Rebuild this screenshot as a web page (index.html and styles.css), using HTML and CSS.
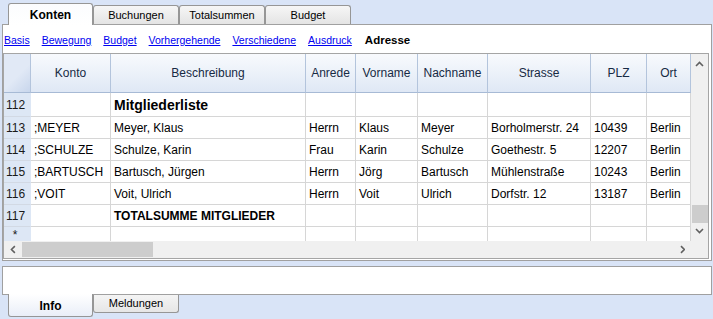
FILE: index.html
```html
<!DOCTYPE html>
<html lang="de">

<head>
  <meta charset="UTF-8">
  <title>Konten - Adresse</title>
  <link rel="stylesheet" href="styles.css">
</head>

<body>
  <div class="tabs tabs--top">
    <div class="tab tab--active">Konten</div>
    <div class="tab">Buchungen</div>
    <div class="tab">Totalsummen</div>
    <div class="tab">Budget</div>
  </div>

  <div class="panel">
    <nav class="views">
      <a href="#">Basis</a>
      <a href="#">Bewegung</a>
      <a href="#">Budget</a>
      <a href="#">Vorhergehende</a>
      <a href="#">Verschiedene</a>
      <a href="#">Ausdruck</a>
      <span class="views__current">Adresse</span>
    </nav>

    <div class="grid">
      <div class="grid__main">
        <div class="grid__view">
          <div class="cells">
            <div class="hd hd--corner"></div>
            <div class="hd">Konto</div>
            <div class="hd">Beschreibung</div>
            <div class="hd">Anrede</div>
            <div class="hd">Vorname</div>
            <div class="hd">Nachname</div>
            <div class="hd">Strasse</div>
            <div class="hd">PLZ</div>
            <div class="hd">Ort</div>

            <div class="rn rn--tall">112</div>
            <div class="c"></div>
            <div class="c c--title">Mitgliederliste</div>
            <div class="c"></div><div class="c"></div><div class="c"></div><div class="c"></div><div class="c"></div><div class="c"></div>

            <div class="rn">113</div>
            <div class="c">;MEYER</div>
            <div class="c">Meyer, Klaus</div>
            <div class="c">Herrn</div>
            <div class="c">Klaus</div>
            <div class="c">Meyer</div>
            <div class="c">Borholmerstr. 24</div>
            <div class="c">10439</div>
            <div class="c">Berlin</div>

            <div class="rn">114</div>
            <div class="c">;SCHULZE</div>
            <div class="c">Schulze, Karin</div>
            <div class="c">Frau</div>
            <div class="c">Karin</div>
            <div class="c">Schulze</div>
            <div class="c">Goethestr. 5</div>
            <div class="c">12207</div>
            <div class="c">Berlin</div>

            <div class="rn">115</div>
            <div class="c">;BARTUSCH</div>
            <div class="c">Bartusch, Jürgen</div>
            <div class="c">Herrn</div>
            <div class="c">Jörg</div>
            <div class="c">Bartusch</div>
            <div class="c">Mühlenstraße</div>
            <div class="c">10243</div>
            <div class="c">Berlin</div>

            <div class="rn">116</div>
            <div class="c">;VOIT</div>
            <div class="c">Voit, Ulrich</div>
            <div class="c">Herrn</div>
            <div class="c">Voit</div>
            <div class="c">Ulrich</div>
            <div class="c">Dorfstr. 12</div>
            <div class="c">13187</div>
            <div class="c">Berlin</div>

            <div class="rn">117</div>
            <div class="c"></div>
            <div class="c c--total">TOTALSUMME MITGLIEDER</div>
            <div class="c"></div><div class="c"></div><div class="c"></div><div class="c"></div><div class="c"></div><div class="c"></div>

            <div class="rn rn--new">*</div>
            <div class="c"></div><div class="c"></div><div class="c"></div><div class="c"></div><div class="c"></div><div class="c"></div><div class="c"></div><div class="c"></div>
          </div>
        </div>

        <div class="vscroll">
          <svg class="arrow" width="9" height="6" viewBox="0 0 9 6"><polyline points="1,5 4.5,1.5 8,5" fill="none" stroke="#606060" stroke-width="1.6"/></svg>
          <div class="vscroll__track">
            <div class="vscroll__thumb"></div>
          </div>
          <svg class="arrow" width="9" height="6" viewBox="0 0 9 6"><polyline points="1,1 4.5,4.5 8,1" fill="none" stroke="#606060" stroke-width="1.6"/></svg>
        </div>
      </div>

      <div class="hscroll">
        <svg class="arrow" width="6" height="9" viewBox="0 0 6 9"><polyline points="5,1 1.5,4.5 5,8" fill="none" stroke="#606060" stroke-width="1.6"/></svg>
        <div class="hscroll__track">
          <div class="hscroll__thumb"></div>
        </div>
        <svg class="arrow" width="6" height="9" viewBox="0 0 6 9"><polyline points="1,1 4.5,4.5 1,8" fill="none" stroke="#606060" stroke-width="1.6"/></svg>
        <div class="hscroll__corner"></div>
      </div>
    </div>
  </div>

  <div class="info"></div>

  <div class="tabs tabs--bottom">
    <div class="tab tab--active">Info</div>
    <div class="tab">Meldungen</div>
  </div>
</body>

</html>
```

FILE: styles.css
```css
* {
  margin: 0;
  padding: 0;
  box-sizing: border-box;
}

body {
  width: 713px;
  height: 319px;
  overflow: hidden;
  background: #d9e4f7;
  font-family: 'Liberation Sans', Arial, sans-serif;
  font-size: 12px;
  color: #000;
}

/* Reiter oben / unten */
.tabs {
  display: flex;
  padding-left: 8px;
  position: relative;
  z-index: 1;
}

.tabs--top {
  height: 25px;
  align-items: flex-end;
  margin-bottom: -1px;
}

.tab {
  width: 86px;
  text-align: center;
  font-size: 11px;
  color: #000;
  border: 1px solid #969696;
}

.tabs--top .tab {
  height: 19px;
  margin-bottom: 1px;
  line-height: 18px;
  border-bottom: none;
  border-radius: 3px 3px 0 0;
  background: linear-gradient(#f6f6f6, #e4e4e4);
}

.tabs--top .tab--active {
  width: 85px;
  height: 22px;
  margin-bottom: 0;
  line-height: 22px;
  font-weight: bold;
  font-size: 12px;
  background: linear-gradient(#fbfcfe, #ffffff);
}

.tabs--bottom {
  margin-top: -1px;
  align-items: flex-start;
}

.tabs--bottom .tab {
  height: 18px;
  margin-top: 1px;
  line-height: 16px;
  border-top: none;
  border-radius: 0 0 3px 3px;
  background: linear-gradient(#f4f4f4, #e6e6e6);
}

.tabs--bottom .tab--active {
  width: 85px;
  height: 23px;
  margin-top: 0;
  line-height: 24px;
  font-weight: bold;
  font-size: 12px;
  background: linear-gradient(#ffffff, #e9eef8);
}

/* Hauptfenster */
.panel {
  width: 710px;
  height: 237px;
  margin-left: 2px;
  background: #fff;
  border: 1px solid #a0a0a0;
  padding: 0 2px 1px 0;
  display: flex;
  flex-direction: column;
}

.views {
  height: 28px;
  display: flex;
  align-items: center;
  gap: 12px;
  padding: 2px 0 0 1px;
  font-size: 10.5px;
}

.views a {
  color: #0000f0;
  text-decoration: underline;
}

.views__current {
  margin-left: 1px;
  font-weight: bold;
  font-size: 11.5px;
}

.grid {
  border: 1px solid #a5a5a5;
  display: flex;
  flex-direction: column;
}

.grid__main {
  display: flex;
  height: 187px;
}

.grid__view {
  width: 687px;
  overflow: hidden;
}

.cells {
  display: grid;
  grid-template-columns: 27px 80px 195px 50px 62px 70px 103px 56px 44px;
  grid-template-rows: 39px 24px repeat(5, 22px) 14px;
}

.hd {
  display: flex;
  align-items: center;
  justify-content: center;
  background: linear-gradient(#f8fafd, #dfe8f5);
  border-right: 1px solid #b3c4dc;
  border-bottom: 1px solid #a7bad5;
  color: #172a44;
  white-space: nowrap;
  overflow: hidden;
}

.hd--corner {
  background: linear-gradient(135deg, #e1e9f6 55%, #c8d6ec);
}

.rn {
  display: flex;
  align-items: center;
  padding-left: 2px;
  background: #dde7f5;
  border-bottom: 1px solid #d2d9e4;
  border-right: 1px solid #dde7f5;
  color: #1a1a1a;
}

.rn--new {
  justify-content: center;
  align-items: flex-start;
  padding: 3px 4px 0 0;
  line-height: 10px;
  border-bottom: none;
}

.c {
  display: flex;
  align-items: center;
  padding-left: 3px;
  border-right: 1px solid #d6d6d6;
  border-bottom: 1px solid #d6d6d6;
  white-space: nowrap;
  overflow: hidden;
}

.rn--new ~ .c {
  border-bottom: none;
}

.c--title {
  font-size: 14px;
  font-weight: bold;
  padding-top: 1px;
}

.c--total {
  font-weight: bold;
}

/* Rollbalken */
.vscroll {
  width: 17px;
  background: #f0f0f0;
  display: flex;
  flex-direction: column;
  align-items: center;
}

.vscroll .arrow {
  margin: 7px 0 5px;
}

.vscroll__track {
  flex: 1;
  width: 100%;
  padding: 133px 0 0 1px;
}

.vscroll__thumb {
  height: 18px;
  background: #cdcdcd;
}

.vscroll .arrow:last-child {
  margin: 4px 0 7px;
}

.hscroll {
  height: 17px;
  background: #f0f0f0;
  display: flex;
  align-items: center;
}

.hscroll .arrow {
  margin: 0 6px;
}

.hscroll__track {
  width: 669px;
  height: 100%;
  padding: 1px 0;
}

.hscroll__thumb {
  width: 131px;
  height: 100%;
  background: #cdcdcd;
}

.hscroll__corner {
  width: 17px;
  height: 100%;
  margin-left: auto;
}

.info {
  width: 710px;
  height: 29px;
  margin: 5px 0 0 2px;
  background: #fff;
  border: 1px solid #a0a0a0;
}
```
